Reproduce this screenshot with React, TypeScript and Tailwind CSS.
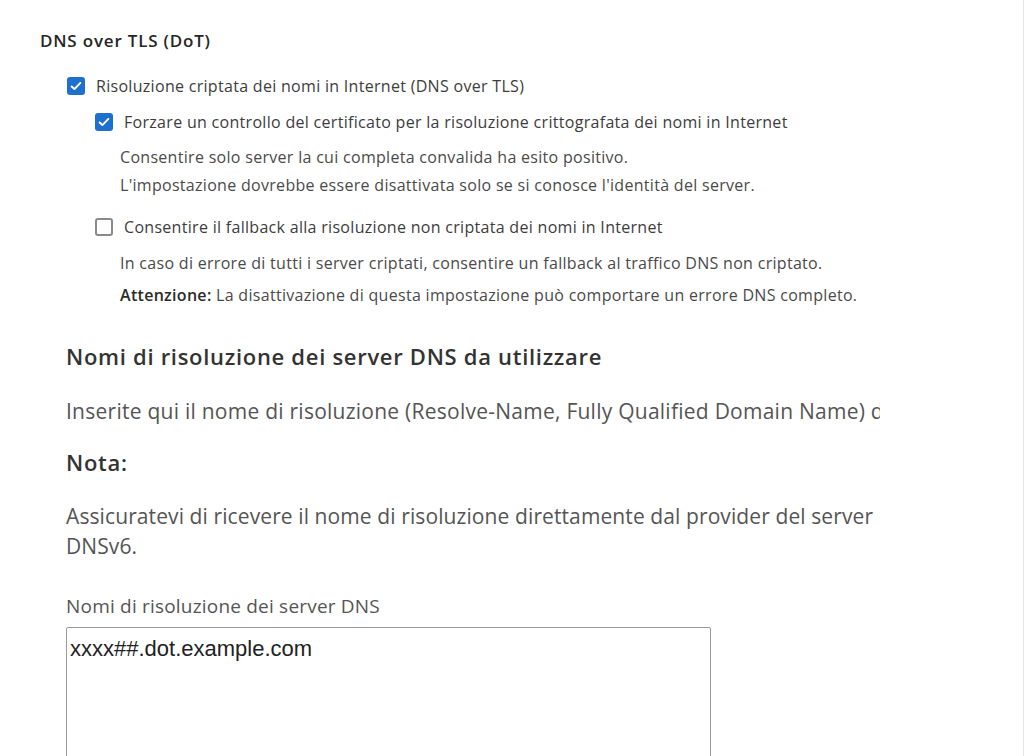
import React from "react";

function Box({ checked }: { checked: boolean }) {
  return checked ? (
    <span className="flex h-[18px] w-[18px] shrink-0 items-center justify-center rounded-[3px] bg-[#1f6fce]">
      <svg viewBox="0 0 16 16" className="h-[14px] w-[14px]" fill="none">
        <path d="M3 8.5l3.2 3L13 4.5" stroke="#fff" strokeWidth="2.2" strokeLinecap="round" strokeLinejoin="round" />
      </svg>
    </span>
  ) : (
    <span className="h-[18px] w-[18px] shrink-0 rounded-[3px] border-2 border-[#8a8a8a] bg-white" />
  );
}

export default function App() {
  return (
    <div className="h-[756px] overflow-hidden border-r border-[#e6e6e6] bg-white font-['Open_Sans',sans-serif]">
      <div className="px-10 pt-[31px]">
        <h3 className="text-[17px] font-semibold leading-5 tracking-[0.8px] text-[#262626]">DNS over TLS (DoT)</h3>

        <div className="mt-[23px] pl-[27px] text-[16px] tracking-[0.3px] text-[#3d3d3d]">
          <label className="flex h-6 items-center gap-[11px]">
            <Box checked />
            Risoluzione criptata dei nomi in Internet (DNS over TLS)
          </label>

          <div className="mt-3 pl-7">
            <label className="flex h-6 items-center gap-[11px]">
              <Box checked />
              Forzare un controllo del certificato per la risoluzione crittografata dei nomi in Internet
            </label>
            <div className="mt-[13px] space-y-[7px] pl-[25px] leading-[21px] text-[#4a4a4a]">
              <p>Consentire solo server la cui completa convalida ha esito positivo.</p>
              <p>L'impostazione dovrebbe essere disattivata solo se si conosce l'identità del server.</p>
            </div>

            <label className="mt-[19px] flex h-6 items-center gap-[11px]">
              <Box checked={false} />
              Consentire il fallback alla risoluzione non criptata dei nomi in Internet
            </label>
            <div className="mt-[14px] space-y-[11px] pl-[25px] leading-[21px] text-[#4a4a4a]">
              <p>In caso di errore di tutti i server criptati, consentire un fallback al traffico DNS non criptato.</p>
              <p>
                <span className="font-semibold text-[#2b2b2b]">Attenzione:</span> La disattivazione di questa impostazione può comportare un errore DNS completo.
              </p>
            </div>
          </div>
        </div>
      </div>

      <div className="w-[880px] overflow-hidden pl-[66px] pt-[36px]">
        <h2 className="text-[22px] font-semibold leading-7 tracking-[0.7px] text-[#333]">Nomi di risoluzione dei server DNS da utilizzare</h2>
        <p className="mt-[27px] whitespace-nowrap text-[21px] leading-7 tracking-[0.25px] text-[#555]">
          Inserite qui il nome di risoluzione (Resolve-Name, Fully Qualified Domain Name) dei server DNS
        </p>
        <h2 className="mt-[23px] text-[22px] font-semibold leading-7 tracking-[0.7px] text-[#333]">Nota:</h2>
        <p className="mt-[25px] whitespace-nowrap text-[21px] leading-[30px] tracking-[0.1px] text-[#555]">
          Assicuratevi di ricevere il nome di risoluzione direttamente dal provider del server DNS o
          <br />
          DNSv6.
        </p>
        <label className="mt-[33px] block text-[19px] leading-6 tracking-[0.2px] text-[#555]">Nomi di risoluzione dei server DNS</label>
        <div className="mt-[9px] h-[140px] w-[645px] rounded-[2px] border border-[#9a9a9a] px-[3px] pt-[9px] font-['Liberation_Sans',sans-serif] text-[22px] leading-6 text-[#222]">
          xxxx##.dot.example.com
        </div>
      </div>
    </div>
  );
}
